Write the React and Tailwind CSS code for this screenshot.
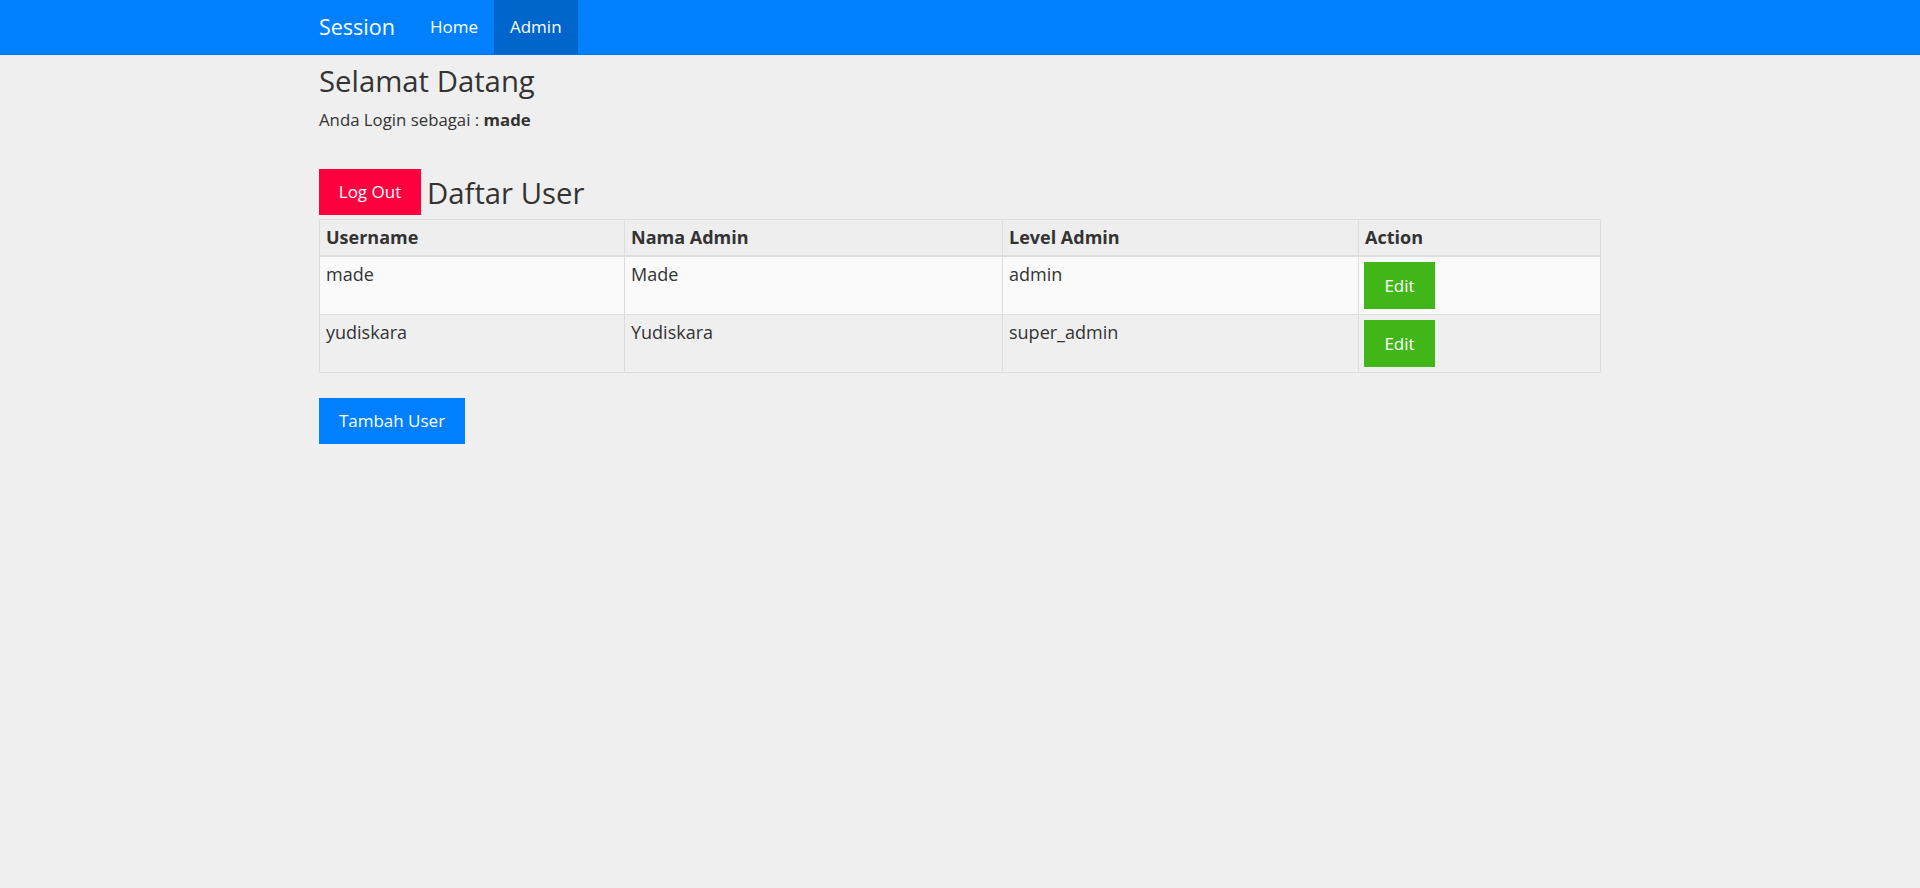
import React from 'react';

const users = [
  { username: 'made', nama: 'Made', level: 'admin' },
  { username: 'yudiskara', nama: 'Yudiskara', level: 'super_admin' },
];

const App = () => {
  return (
    <div className="min-h-screen bg-[#efefef] text-[#333333] font-['Open_Sans',sans-serif]">
      {/* Navbar */}
      <nav className="h-[55px] bg-[#007fff] border-b border-[#0072e6]">
        <div className="w-[1282px] mx-auto flex h-[54px] items-stretch">
          <a className="flex items-center pr-[19px] text-[21.5px] text-white">Session</a>
          <a className="flex items-center px-4 text-[17px] text-white">Home</a>
          <a className="flex items-center px-4 text-[17px] text-white bg-[#0066cc]">Admin</a>
        </div>
      </nav>

      <div className="w-[1282px] mx-auto">
        <h1 className="mt-[10px] text-[29.3px] leading-[33px]">Selamat Datang</h1>
        <p className="mt-[10px] text-[16.8px] leading-[24px]">
          Anda Login sebagai : <b>made</b>
        </p>

        <div className="mt-[37px] flex items-end gap-[6px]">
          <button className="h-[46px] w-[102px] bg-[#ff003f] text-white text-[17px]">Log Out</button>
          <h3 className="text-[29.3px] leading-[40px] mb-[2px]">Daftar User</h3>
        </div>

        <table className="mt-[4px] w-full border-collapse border border-[#dddddd] text-[18px]">
          <thead>
            <tr className="bg-[#eeeeee]">
              <th className="w-[305px] text-left font-bold border border-[#dddddd] border-b-2 px-[6px] py-[5px] leading-[25px]">Username</th>
              <th className="w-[378px] text-left font-bold border border-[#dddddd] border-b-2 px-[6px] py-[5px] leading-[25px]">Nama Admin</th>
              <th className="w-[356px] text-left font-bold border border-[#dddddd] border-b-2 px-[6px] py-[5px] leading-[25px]">Level Admin</th>
              <th className="text-left font-bold border border-[#dddddd] border-b-2 px-[6px] py-[5px] leading-[25px]">Action</th>
            </tr>
          </thead>
          <tbody>
            {users.map((u, i) => (
              <tr key={u.username} className={i % 2 === 0 ? 'bg-[#fafafa]' : 'bg-[#efefef]'}>
                <td className="align-top border border-[#dddddd] px-[6px] py-[5px] leading-[25px]">{u.username}</td>
                <td className="align-top border border-[#dddddd] px-[6px] py-[5px] leading-[25px]">{u.nama}</td>
                <td className="align-top border border-[#dddddd] px-[6px] py-[5px] leading-[25px]">{u.level}</td>
                <td className="align-top border border-[#dddddd] px-[5px] py-[5px]">
                  <button className="block h-[47px] w-[71px] bg-[#41b619] text-white text-[17px]">Edit</button>
                </td>
              </tr>
            ))}
          </tbody>
        </table>

        <button className="mt-[25px] h-[46px] w-[146px] bg-[#007fff] text-white text-[17px]">Tambah User</button>
      </div>
    </div>
  );
};

export default App;
